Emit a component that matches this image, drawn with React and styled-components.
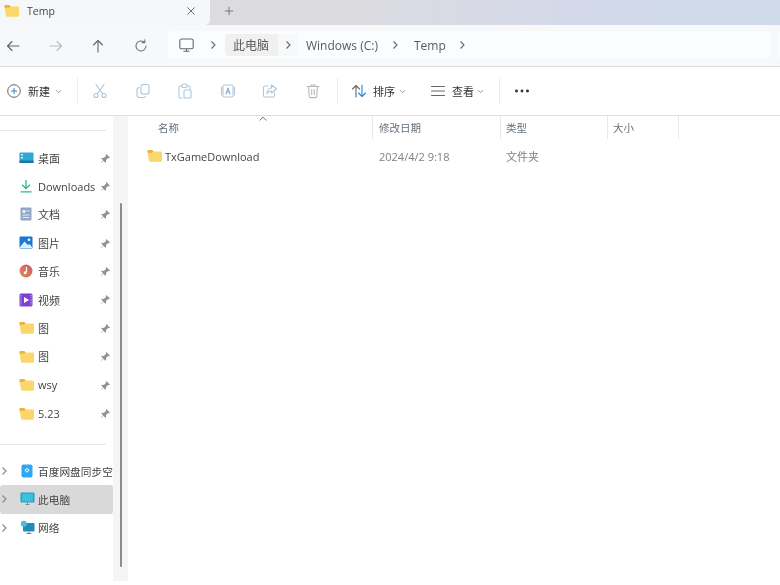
import React from 'react';
import styled, { createGlobalStyle } from 'styled-components';

const Global = createGlobalStyle`
  html, body { margin: 0; padding: 0; background: #fff; }
  body { font-family: "Open Sans", "Noto Sans CJK SC", sans-serif; }
`;

const Window = styled.div`
  width: 780px; height: 585px; overflow: hidden; background: #fff; display: flex; flex-direction: column;
  color: #3c3c3c; filter: blur(0.5px);
`;
const TitleBar = styled.div`
  height: 25px; display: flex; align-items: center; flex: none;
  background: linear-gradient(90deg, #dddddf 0%, #dcdbe0 45%, #d3d9ea 75%, #cfdbea 100%);
`;
const Tab = styled.div`
  width: 210px; height: 25px; background: #f6f7f8; border-bottom-right-radius: 5px; display: flex; align-items: center;
  padding: 0 13px 4px 4px; box-sizing: border-box; flex: none;
`;
const TabTitle = styled.span`
  font-size: 10.5px; margin-left: 8px; flex: 1; color: #444; font-weight: 500;
`;
const NewTab = styled.div`
  margin: -3px 0 0 13px; display: flex;
`;
const NavBar = styled.div`
  height: 42px; flex: none; display: flex; align-items: center; background: #f6f8fa; box-sizing: border-box;
  border-bottom: 1px solid #dcdde0; overflow: hidden;
`;
const NavButtons = styled.div`
  display: flex; width: 168px; flex: none; margin-left: -8px; padding-right: 8px; box-sizing: content-box; 
`;
const NavButton = styled.div`
  width: 42.5px; display: flex; justify-content: center; flex: none;
`;
const Address = styled.div`
  margin-top: -1px; width: 603px; height: 28px; background: #fbfcfd; border-radius: 4px; display: flex; align-items: center;
  font-size: 12px; flex: none; padding-left: 10.5px; box-sizing: border-box;
`;
const SearchBox = styled(Address)`
  margin-left: 7px; width: 40px; padding: 0;
`;
const Crumb = styled.span`
  color: #5a5a5a; white-space: nowrap; margin-left: ${p => p.$ml || 0}px;
`;
const CrumbChevron = styled.span`
  display: flex; margin-left: ${p => p.$ml || 0}px;
`;
const CrumbGroup = styled.div`
  display: flex; align-items: stretch; height: 22px; border-radius: 4px; background: #f7f8f9; margin-left: 8px; width: 73px; overflow: hidden; flex: none;
`;
const CrumbActive = styled.div`
  width: 53px; background: #f0f0f1; padding-left: 8px; box-sizing: border-box; display: flex; align-items: center; color: #5a5a5a;
`;
const CrumbArrow = styled.div`
  width: 20px; display: flex; align-items: center; justify-content: center;
`;
const Toolbar = styled.div`
  height: 49px; flex: none; display: flex; align-items: center; background: #fff; border-bottom: 1.5px solid #dddedf; box-sizing: border-box; padding-left: 7px;
`;
const ToolLabel = styled.span`
  font-size: 11px; color: #333; margin-left: ${p => p.$ml}px; margin-right: ${p => p.$mr}px;
`;
const Separator = styled.div`
  width: 1px; height: 26px; background: #ececec; flex: none; margin-left: ${p => p.$ml}px;
`;
const ToolIcon = styled.div`
  flex: none; width: ${p => p.$w || 42.6}px; margin-left: ${p => p.$ml || 0}px; display: flex; justify-content: center;
`;
const Body = styled.div`
  display: flex; height: 465px; flex: none;
`;
const Sidebar = styled.div`
  width: 113px; flex: none; display: flex; flex-direction: column; padding-top: 14px; box-sizing: border-box;
`;
const Divider = styled.div`
  height: 1px; background: #e6e6e6; margin-right: 7px; flex: none;
`;
const Group = styled.div`
  display: flex; flex-direction: column; padding: ${p => p.$top}px 0 ${p => 29 - p.$top}px;
`;
const Row = styled.div`
  height: 28.4px; display: flex; align-items: center; position: relative; padding-left: ${p => p.$tree ? 0 : 18}px; flex: none;
  background: ${p => p.$selected ? '#d9d9d9' : 'transparent'}; border-radius: 3px; font-size: ${p => p.$tree ? 10.7 : 11}px; color: #444;
  white-space: nowrap; width: 113px; box-sizing: border-box; overflow: hidden;
`;
const RowIcon = styled.div`
  width: 16px; height: 16px; display: flex; align-items: center; justify-content: center; flex: none; margin-right: ${p => p.$mr}px;
`;
const Pin = styled.div`
  position: absolute; right: 2px; top: 9px; display: flex;
`;
const Expander = styled.div`
  width: 19px; display: flex; justify-content: center; padding-right: 11px; box-sizing: border-box; flex: none;
`;
const Track = styled.div`
  width: 15px; background: #f5f5f5; flex: none; padding: 87px 0 14px 7px; box-sizing: border-box; height: 465px;
`;
const Thumb = styled.div`
  width: 2px; height: 364px; background: #8c8c8c; border-radius: 1px;
`;
const Main = styled.div`
  flex: 1; display: flex; flex-direction: column; min-width: 0;
`;
const Header = styled.div`
  display: grid; grid-template-columns: 245px 128px 107px 71px; height: 23px; position: relative;
`;
const HeadCell = styled.div`
  font-size: 10.5px; color: #66707a; border-right: 1px solid #e8e8e8; padding-left: ${p => p.$pl || 5}px; display: flex; align-items: center; box-sizing: border-box;
`;
const Caret = styled.svg`
  position: absolute; left: 130px; top: 0;
`;
const FileRow = styled.div`
  display: grid; grid-template-columns: 245px 128px 107px 71px; height: 34px; align-items: center; font-size: 11px;
`;
const NameCell = styled.div`
  display: flex; align-items: center; padding-left: 19px; color: #444;
`;
const FileName = styled.span`
  margin-left: 3px;
`;
const MetaCell = styled.div`
  color: #808080; padding-left: ${p => p.$pl || 5}px; font-size: 11px;
`;
const Gap = styled.span`
  flex: none; width: ${p => p.$w}px;
`;

const Folder = ({ w = 16 }) => (
  <svg width={w} height={w * 0.875} viewBox="0 0 16 14">
    <path d="M0.5 2.5a1.5 1.5 0 0 1 1.5-1.5h3.5l1.5 1.6h7.5a1.5 1.5 0 0 1 1.5 1.5v7.9a1.5 1.5 0 0 1-1.5 1.5h-11a1.5 1.5 0 0 1-1.5-1.5z" fill="#fbd66a" />
    <path d="M0.5 2.5a1.5 1.5 0 0 1 1.5-1.5h3.5l1.5 1.6-1.8 1.4h-4.7z" fill="#eeb23c" />
  </svg>
);
const Chevron = ({ c = '#666' }) => (
  <svg width="8" height="10" viewBox="0 0 8 10" fill="none" stroke={c} strokeWidth="1.1"><path d="M2.5 1.5 6 5 2.5 8.5" /></svg>
);
const Down = () => (
  <svg width="7" height="5" viewBox="0 0 7 5" fill="none" stroke="#8a8a8a" strokeWidth="0.9"><path d="M1 1.2 3.5 3.7 6 1.2" /></svg>
);
const S = ({ children, c = '#666', s = 16, w = 1.1 }) => (
  <svg width={s} height={s} viewBox="0 0 16 16" fill="none" stroke={c} strokeWidth={w} strokeLinecap="round" strokeLinejoin="round">{children}</svg>
);
const PinIcon = () => (
  <svg width="11" height="11" viewBox="0 0 9 9"><path d="M5.2.8 8.2 3.8 7.4 4.2 6.6 4 4.9 5.8 5 7.4 4.4 8 2.8 6.3.9 8.2.7 8 2.6 6 1 4.5 1.6 3.9 3.2 4 5 2.3 4.8 1.5z" fill="#8b9199" /></svg>
);

const Desktop = () => (
  <svg width="15" height="12" viewBox="0 0 15 12"><rect x=".5" y=".5" width="14" height="10.5" rx="1" fill="#2fa8d6" /><rect x=".5" y="8.5" width="14" height="2.5" fill="#1678a8" /><rect x="2" y="2" width="2" height="1.5" fill="#d8f2fb" /><rect x="2" y="5" width="2" height="1.5" fill="#d8f2fb" /></svg>
);
const Download = () => (
  <svg width="14" height="14" viewBox="0 0 14 14" fill="none" stroke="#2cb58f" strokeWidth="1.3"><path d="M7 1v8M3 5.8 7 9.6l4-3.8M1.5 12.8h11" /></svg>
);
const Doc = () => (
  <svg width="12" height="14" viewBox="0 0 12 14"><rect x=".5" y=".5" width="11" height="13" rx="1" fill="#8fa5c6" /><rect x="2.5" y="3" width="3" height="3" fill="#e8eef6" /><rect x="6.5" y="3.5" width="3" height="1" fill="#e8eef6" /><rect x="2.5" y="7.5" width="7" height="1" fill="#e8eef6" /><rect x="2.5" y="10" width="7" height="1" fill="#e8eef6" /></svg>
);
const Picture = () => (
  <svg width="14" height="13" viewBox="0 0 14 13"><rect x=".5" y=".5" width="13" height="12" rx="1" fill="#1977d4" /><circle cx="10" cy="3.8" r="1.4" fill="#e8f4ff" /><path d="M1 11 5.5 5.5 9 9l1.5-1L13 11v1H1z" fill="#dcefff" /></svg>
);
const Music = () => (
  <svg width="14" height="14" viewBox="0 0 14 14"><defs><linearGradient id="mg" x1="0" y1="1" x2="1" y2="0"><stop offset="0" stopColor="#e88a45" /><stop offset="1" stopColor="#c95a78" /></linearGradient></defs><circle cx="7" cy="7" r="6.5" fill="url(#mg)" /><path d="M7.5 3v5" stroke="#fff" strokeWidth="1.2" /><circle cx="6.2" cy="8.7" r="1.5" fill="#fff" /></svg>
);
const Video = () => (
  <svg width="14" height="14" viewBox="0 0 14 14"><rect x=".5" y=".5" width="13" height="13" rx="1.5" fill="#7d3fd1" /><path d="M5 4 10 7 5 10z" fill="#fff" /><path d="M2 2v10M12 2v10" stroke="#c9a8f2" strokeWidth="1.2" strokeDasharray="1.2 1.2" /></svg>
);
const Cloud = () => (
  <svg width="12" height="14" viewBox="0 0 12 14"><rect x=".5" y=".5" width="11" height="13" rx="2" fill="#2ea6f3" /><path d="M6 3.8 8.6 6.3 6 8.8 3.4 6.3z" fill="#e9f7ff" /><circle cx="6" cy="6.3" r="1" fill="#2ea6f3" /></svg>
);
const PC = () => (
  <svg width="15" height="14" viewBox="0 0 15 14"><rect x=".5" y=".5" width="14" height="10" rx="1" fill="#1fa3c9" /><rect x="2" y="1.6" width="11" height="7.8" fill="#3cc0dd" /><path d="M5.5 12.5h4" stroke="#7a8a92" strokeWidth="1.2" /><path d="M7.5 10.5v2" stroke="#7a8a92" /></svg>
);
const Net = () => (
  <svg width="15" height="15" viewBox="0 0 15 15"><rect x="3" y="3" width="11.5" height="8.5" rx="1" fill="#1b8fb8" /><circle cx="3.8" cy="3.8" r="3" fill="#56b7dc" /><path d="M6.5 13.5h5M9 11.5v2" stroke="#70848f" strokeWidth="1.1" /></svg>
);

const quick = [
  ['桌面', <Desktop />], ['Downloads', <Download />], ['文档', <Doc />], ['图片', <Picture />], ['音乐', <Music />],
  ['视频', <Video />], ['图', <Folder w={15} />], ['图', <Folder w={15} />], ['wsy', <Folder w={15} />], ['5.23', <Folder w={15} />],
];
const tree = [['百度网盘同步空', <Cloud />], ['此电脑', <PC />, true], ['网络', <Net />]];

export default function App() {
  return (
    <>
      <Global />
      <Window>
        <TitleBar>
          <Tab>
            <Folder w={15} />
            <TabTitle>Temp</TabTitle>
            <S s={12} c="#555"><path d="M3.5 3.5l9 9M12.5 3.5l-9 9" /></S>
          </Tab>
          <NewTab><S s={12} c="#666"><path d="M8 3v10M3 8h10" /></S></NewTab>
        </TitleBar>
        <NavBar>
          <NavButtons>
            <NavButton><S c="#666"><path d="M14 8H2.5M7 3.5 2.5 8 7 12.5" /></S></NavButton>
            <NavButton><S c="#bbb"><path d="M2 8h11.5M9 3.5 13.5 8 9 12.5" /></S></NavButton>
            <NavButton><S c="#666"><path d="M8 14V2.5M3.5 7 8 2.5 12.5 7" /></S></NavButton>
            <NavButton><S c="#777"><path d="M13 8a5 5 0 1 1-1.6-3.7M11.8 1.8v2.8H9" /></S></NavButton>
          </NavButtons>
          <Address>
            <svg width="15" height="15" viewBox="0 0 15 15" fill="none" stroke="#666" strokeWidth="1.1"><rect x=".8" y="1" width="13.4" height="9.8" rx="1.8" /><path d="M7.5 10.8v2M4.5 13.2h6" /></svg>
            <CrumbChevron $ml={15.5}><Chevron /></CrumbChevron>
            <CrumbGroup>
              <CrumbActive>此电脑</CrumbActive>
              <CrumbArrow><Chevron /></CrumbArrow>
            </CrumbGroup>
            <Crumb $ml={8}>Windows (C:)</Crumb>
            <CrumbChevron $ml={13}><Chevron /></CrumbChevron>
            <Crumb $ml={15}>Temp</Crumb>
            <CrumbChevron $ml={12}><Chevron /></CrumbChevron>
          </Address>
          <SearchBox />
        </NavBar>
        <Toolbar>
          <svg width="14" height="14" viewBox="0 0 14 14" fill="none" strokeWidth="1"><circle cx="7" cy="7" r="6.3" stroke="#666" /><path d="M7 4v6M4 7h6" stroke="#2a86d8" /></svg>
          <ToolLabel $ml={7} $mr={5}>新建</ToolLabel>
          <Down />
          <Separator $ml={15} />
          <ToolIcon $ml={0.7}><S c="#a9c6dd"><path d="M4 1.5 10.5 10.5M12 1.5 5.5 10.5" /><circle cx="4" cy="12.5" r="2" /><circle cx="12" cy="12.5" r="2" /></S></ToolIcon>
          <ToolIcon><S c="#a9c6dd"><rect x="6" y="1.5" width="8" height="9.5" rx="2" /><path d="M4 4.5A2.5 2.5 0 0 0 2 7v5a2.5 2.5 0 0 0 2.5 2.5h4a2.5 2.5 0 0 0 2-1.2" /></S></ToolIcon>
          <ToolIcon><S c="#b6c7d6"><path d="M4.5 3H3a1 1 0 0 0-1 1v10a1 1 0 0 0 1 1h2M10.5 3H12a1 1 0 0 1 1 1v2" /><rect x="5" y="1" width="5" height="3.5" rx="1" /><rect x="7" y="7" width="7" height="8" rx="1" stroke="#a9c6dd" /></S></ToolIcon>
          <ToolIcon><S c="#b6c7d6"><rect x="3" y="2" width="10" height="12" rx="1.5" /><path d="M1.5 4v8M14.5 4v8" /><path d="M6 11 8 5l2 6M6.7 9h2.6" stroke="#7ab0dc" /></S></ToolIcon>
          <ToolIcon><S c="#b6c7d6"><path d="M6 3H3a1.5 1.5 0 0 0-1.5 1.5v8A1.5 1.5 0 0 0 3 14h8a1.5 1.5 0 0 0 1.5-1.5V10" /><path d="M9.5 2 14.5 6 9.5 10V8C7 8 5.5 9 5 11 5 7.5 7 5 9.5 5z" stroke="#a9c6dd" /></S></ToolIcon>
          <ToolIcon><S c="#b8b8b8"><path d="M2 3.5h12M6 3.5V2h4v1.5M3.5 3.5l.7 10a1.2 1.2 0 0 0 1.2 1.1h5.2a1.2 1.2 0 0 0 1.2-1.1l.7-10M6.7 6.5v5M9.3 6.5v5" /></S></ToolIcon>
          <Separator $ml={2.7} />
          <ToolIcon $w={16} $ml={13}><S><path d="M5 14V2.5M1.5 6 5 2.5 8.5 6" stroke="#666" /><path d="M11 2v11.5M7.5 10 11 13.5 14.5 10" stroke="#2a86d8" /></S></ToolIcon>
          <ToolLabel $ml={6} $mr={4.5}>排序</ToolLabel>
          <Down />
          <Gap $w={23.5} />
          <S c="#666"><path d="M1.5 3.5h13M1.5 8h13M1.5 12.5h13" /></S>
          <ToolLabel $ml={6} $mr={3.5}>查看</ToolLabel>
          <Down />
          <Separator $ml={14.5} />
          <ToolIcon $w={44}><S c="#333"><circle cx="2.5" cy="8" r=".9" fill="#333" /><circle cx="8" cy="8" r=".9" fill="#333" /><circle cx="13.5" cy="8" r=".9" fill="#333" /></S></ToolIcon>
        </Toolbar>
        <Body>
          <Sidebar>
            <Divider />
            <Group $top={12.5}>
              {quick.map(([t, icon], i) => (
                <Row key={i}>
                  <RowIcon $mr={4}>{icon}</RowIcon>{t}
                  <Pin><PinIcon /></Pin>
                </Row>
              ))}
            </Group>
            <Divider />
            <Group $top={12}>
              {tree.map(([t, icon, sel], i) => (
                <Row key={i} $tree $selected={sel}>
                  <Expander><Chevron c="#888" /></Expander>
                  <RowIcon $mr={3}>{icon}</RowIcon>{t}
                </Row>
              ))}
            </Group>
          </Sidebar>
          <Track><Thumb /></Track>
          <Main>
            <Header>
              <Caret width="10" height="6" viewBox="0 0 10 6" fill="none" stroke="#777" strokeWidth="1"><path d="M1.5 4.5 5 1.2l3.5 3.3" /></Caret>
              <HeadCell $pl={30}>名称</HeadCell>
              <HeadCell $pl={6}>修改日期</HeadCell>
              <HeadCell>类型</HeadCell>
              <HeadCell>大小</HeadCell>
            </Header>
            <FileRow>
              <NameCell><Folder w={15} /><FileName>TxGameDownload</FileName></NameCell>
              <MetaCell $pl={6}>2024/4/2 9:18</MetaCell>
              <MetaCell>文件夹</MetaCell>
              <span />
            </FileRow>
          </Main>
        </Body>
      </Window>
    </>
  );
}
